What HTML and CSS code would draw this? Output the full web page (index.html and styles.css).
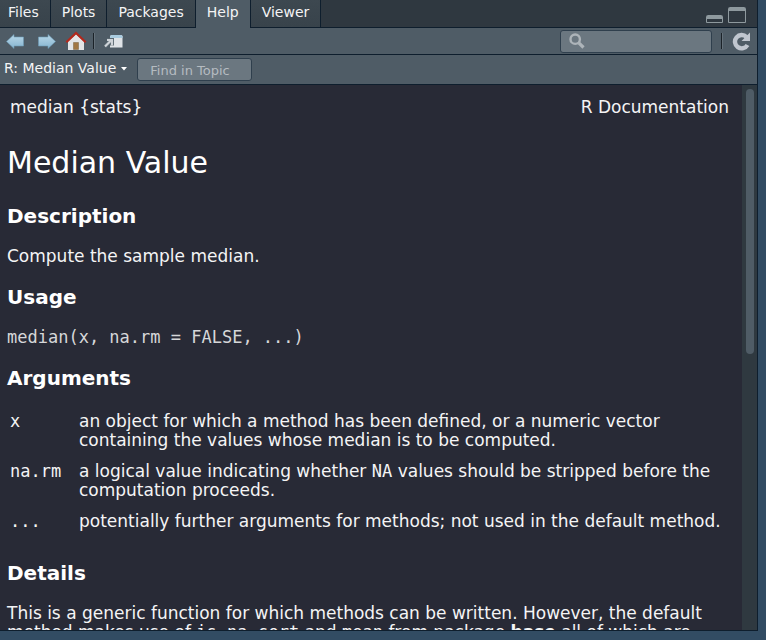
FILE: index.html
```html
<!DOCTYPE html>
<html lang="en">
<head>
<meta charset="utf-8">
<title>R: Median Value</title>
<link rel="stylesheet" href="styles.css">
</head>
<body>
<div class="pane">
  <header class="tabs">
    <nav class="tab-list">
      <button class="tab">Files</button>
      <button class="tab">Plots</button>
      <button class="tab">Packages</button>
      <button class="tab active">Help</button>
      <button class="tab">Viewer</button>
    </nav>
    <div class="window-buttons">
      <button class="icon-button" aria-label="Minimize">
        <svg width="18" height="18" viewBox="0 0 18 18"><path d="M.5 17.500V11.500q0-1 1-1h14q1 0 1 1v6z" fill="#2f3840" stroke="#8e999e"/><path d="M1 11h15v3H1z" fill="#8e999e"/></svg>
      </button>
      <button class="icon-button" aria-label="Maximize">
        <svg width="18" height="18" viewBox="0 0 18 18"><path d="M.5 17.500V3.500q0-1 1-1h15q1 0 1 1v14z" fill="#2f3840" stroke="#8e999e"/><path d="M1 3h16v3H1z" fill="#8e999e"/></svg>
      </button>
    </div>
  </header>

  <div class="toolbar">
    <div class="nav-buttons">
      <button class="icon-button" aria-label="Back">
        <svg width="18" height="16" viewBox="0 0 18 16"><defs><linearGradient id="blue" x2="0" y2="1"><stop stop-color="#b9d8e8"/><stop offset="1" stop-color="#86b4d0"/></linearGradient></defs><path d="M.5 8.500 8 1.500v2.500h9.500v9H8v2.500z" fill="url(#blue)" stroke="#6d9ab5" stroke-width=".6"/></svg>
      </button>
      <button class="icon-button" aria-label="Forward">
        <svg width="18" height="16" viewBox="0 0 18 16"><path d="M17.500 8.500 10 1.500v2.500H.5v9H10v2.500z" fill="url(#blue)" stroke="#6d9ab5" stroke-width=".6"/></svg>
      </button>
    </div>
    <button class="icon-button" aria-label="Home">
      <svg width="22" height="20" viewBox="0 0 22 20"><path d="M3 10.500 11 3l8 7.500v8.500H3z" fill="#e3e4e6"/><path d="M8.500 11.500h5v7h-5z" fill="#a27743" stroke="#76603f" stroke-width=".5"/><path d="M1.300 11.200 11 2l9.700 9.200" fill="none" stroke="#b3281c" stroke-width="2.200"/></svg>
    </button>
    <span class="divider"></span>
    <button class="icon-button" aria-label="Show in new window">
      <svg width="20" height="16" viewBox="0 0 20 16"><path d="M6 4q0-2 2-2h9q1.500 0 1.500 1.500V14.500H6z" fill="#dfe3e7"/><path d="M6 5V4q0-2 2-2h9q1.500 0 1.500 1.500V5z" fill="#a9cbdf"/><path d="m1 13.500 6.500-6.500M3 7h5v5.500" fill="none" stroke="#5a6871" stroke-width="4"/><path d="m1 13.500 6.500-6.500M3 7h5v5.500" fill="none" stroke="#ced3d8" stroke-width="2.200"/></svg>
    </button>
    <label class="search">
      <svg width="16" height="16" viewBox="0 0 16 16"><circle cx="6.200" cy="6.200" r="4.700" fill="none" stroke="#adb4b9" stroke-width="2.400"/><path d="m9.800 9.800 4.700 4.700" stroke="#adb4b9" stroke-width="3.200"/></svg>
      <input type="search" aria-label="Search help">
    </label>
    <span class="divider"></span>
    <button class="icon-button" aria-label="Refresh">
      <svg width="19" height="19" viewBox="0 0 19 19"><path d="M15.500 13A6.700 6.700 0 1 1 14.500 5" fill="none" stroke="#c0c6cf" stroke-width="4.400"/><path d="M18 .5v8.500H9.500z" fill="#c0c6cf"/></svg>
    </button>
  </div>

  <div class="topicbar">
    <button class="topic">R: Median Value <svg width="6" height="4" viewBox="0 0 6 4"><path d="M0 0h6L3 3.500z" fill="#fff"/></svg></button>
    <input class="find" type="text" placeholder="Find in Topic" aria-label="Find in Topic">
  </div>

  <div class="viewport">
    <main class="doc">
      <div class="doc-head"><span>median {stats}</span><span>R Documentation</span></div>
      <h1>Median Value</h1>
      <h2>Description</h2>
      <p>Compute the sample median.</p>
      <h2>Usage</h2>
      <pre>median(x, na.rm = FALSE, ...)</pre>
      <h2>Arguments</h2>
      <table class="args">
        <tr><td><code>x</code></td><td>an object for which a method has been defined, or a numeric vector containing the values whose median is to be computed.</td></tr>
        <tr><td><code>na.rm</code></td><td>a logical value indicating whether <code>NA</code> values should be stripped before the computation proceeds.</td></tr>
        <tr><td><code>...</code></td><td>potentially further arguments for methods; not used in the default method.</td></tr>
      </table>
      <h2>Details</h2>
      <p>This is a generic function for which methods can be written. However, the default method makes use of <code>is.na</code>, <code>sort</code> and <code>mean</code> from package <b>base</b> all of which are</p>
    </main>
    <div class="scrollbar"><div class="thumb"></div></div>
  </div>
</div>
</body>
</html>
```
FILE: styles.css
```css
* { box-sizing: border-box; }
body {
  margin: 0;
  height: 100vh;
  padding: 0 8px 9px 0;
  background: #324c63;
  color: #f4f4f5;
  font-family: "DejaVu Sans", sans-serif;
  font-size: 17px;
  line-height: 19px;
}
button, input { font: inherit; color: inherit; }
button { border: 0; background: none; padding: 0; }
svg { display: block; flex: none; }

.pane {
  height: 100%;
  display: flex;
  flex-direction: column;
  border: solid #0e1e2d;
  border-width: 0 1px 1px 0;
  overflow: hidden;
}

.tabs {
  flex: none;
  height: 28px;
  display: flex;
  justify-content: space-between;
  background: #2f3840;
  box-shadow: inset 0 -1px #0e1e2d;
}
.tab-list { display: flex; font-size: 14px; }
.tab {
  padding: 0 11px 3px;
  border: solid #0e1e2d;
  border-width: 0 1px 1px 0;
  background: linear-gradient(#3d4850, #38434b);
}
.tab:first-child { padding-left: 8px; }
.tab.active { background: #4f5c66; border-bottom: 0; }
.window-buttons { display: flex; gap: 4px; padding: 5px 11px 0 0; }
.window-buttons .icon-button { height: 18px; }

.toolbar {
  flex: none;
  height: 27px;
  display: flex;
  align-items: center;
  padding: 0 6px;
  gap: 9px;
  background: #4f5c66;
  border-bottom: 1px solid #0e1e2d;
}
.nav-buttons { display: flex; gap: 14px; }
.divider {
  width: 2px;
  height: 16px;
  background: linear-gradient(90deg, #1b2228 50%, #65717a 50%);
}
.nav-buttons + .icon-button + .divider { margin-left: -3px; }
.search {
  display: flex;
  align-items: center;
  width: 152px;
  height: 23px;
  margin-left: auto;
  padding-left: 8px;
  background: #6b7780;
  border: 1px solid #2f3f4d;
  border-radius: 3px;
}
.search input { width: 100%; border: 0; background: none; outline: 0; }

.topicbar {
  flex: none;
  height: 30px;
  display: flex;
  align-items: center;
  gap: 10px;
  padding-left: 4px;
  background: #4f5c66;
  border-bottom: 1px solid #0e1e2d;
  font-size: 14px;
}
.topic { display: flex; align-items: center; gap: 5px; padding-bottom: 2px; }
.find {
  width: 115px;
  height: 23px;
  padding: 1px 12px 0;
  background: #6b7780;
  border: 1px solid #2f3f4d;
  border-radius: 3px;
  font-size: 13px;
}
.find::placeholder { color: #b5bbc0; opacity: 1; }

.viewport { flex: 1; min-height: 0; display: flex; background: #282a36; }
.doc { flex: 1; min-width: 0; overflow: hidden; padding: 13px 7px 0; }
.doc-head { display: flex; justify-content: space-between; padding: 0 6px 0 3px; }
h1 { margin: 29px 0 24px; color: #fff; font-size: 30px; line-height: 34px; font-weight: 400; }
h2 { margin: 19px 0; color: #fff; font-size: 20px; line-height: 24px; }
p, pre { margin: 0; }
pre, code { font-family: "DejaVu Sans Mono", monospace; font-size: 17px; line-height: 19px; }
pre { color: #d6d7d9; }
.args { border-collapse: collapse; margin: -3px 0 24px; }
.args td { padding: 6px 3px; vertical-align: top; }
.args td:first-child { width: 69px; }
.scrollbar { width: 15px; padding: 4px 3px 0 4px; background: #2f3940; }
.thumb { height: 49%; border-radius: 4px; background: #4f5c66; }
```
